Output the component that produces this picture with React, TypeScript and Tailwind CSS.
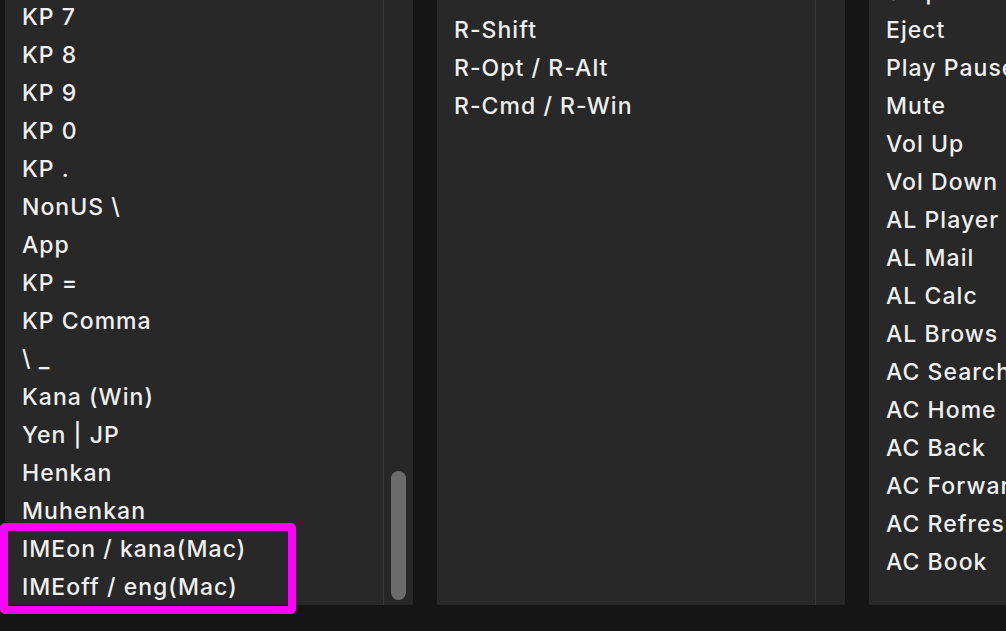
const leftKeys = [
  "KP 7",
  "KP 8",
  "KP 9",
  "KP 0",
  "KP .",
  "NonUS \\",
  "App",
  "KP =",
  "KP Comma",
  "\\ _",
  "Kana (Win)",
  "Yen | JP",
  "Henkan",
  "Muhenkan",
  "IMEon / kana(Mac)",
  "IMEoff / eng(Mac)",
];

const modKeys = ["R-Ctrl", "R-Shift", "R-Opt / R-Alt", "R-Cmd / R-Win"];

const mediaKeys = [
  "Stop",
  "Eject",
  "Play Pause",
  "Mute",
  "Vol Up",
  "Vol Down",
  "AL Player",
  "AL Mail",
  "AL Calc",
  "AL Brows",
  "AC Search",
  "AC Home",
  "AC Back",
  "AC Forward",
  "AC Refresh",
  "AC Book",
];

function KeyRow({ label }: { label: string }) {
  return (
    <div className="h-[38px] flex items-center pl-[17px] whitespace-nowrap text-[23px] font-medium tracking-[0.045em] leading-none text-[#efefef]">
      {label}
    </div>
  );
}

function KeyPanel({
  keys,
  offset,
  thumb,
}: {
  keys: string[];
  offset: string;
  thumb?: boolean;
}) {
  return (
    <div className="h-[605px] w-[408px] shrink-0 bg-[#282828] flex">
      <div className="flex-1 overflow-hidden">
        <div className={offset}>
          {keys.map((k) => (
            <KeyRow key={k} label={k} />
          ))}
        </div>
      </div>
      <div className="w-[30px] border-l border-[#383838] bg-[#272727] flex flex-col justify-end pb-[5px] pl-[7px]">
        {thumb && <div className="w-[15px] h-[129px] rounded-full bg-[#6b6b6b]" />}
      </div>
    </div>
  );
}

export default function App() {
  return (
    <div
      className="relative h-[631px] w-[1006px] overflow-hidden bg-[#151515] flex gap-6 pl-[5px]"
      style={{ fontFamily: "Inter, 'Noto Sans', sans-serif" }}
    >
      <KeyPanel keys={leftKeys} offset="-mt-[2px]" thumb />
      <KeyPanel keys={modKeys} offset="-mt-[27px]" />
      <KeyPanel keys={mediaKeys} offset="-mt-[27px]" />

      {/* highlight annotation */}
      <div className="absolute left-0 top-[523px] w-[296px] h-[91px] border-[8px] border-[#ff00ff] rounded-[5px]" />
    </div>
  );
}
